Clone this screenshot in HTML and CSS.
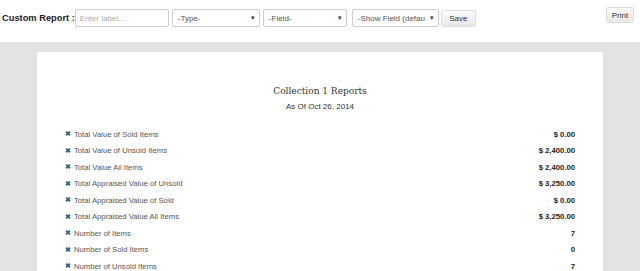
FILE: index.html
```html
<!DOCTYPE html>
<html lang="en">
<head>
    <meta charset="UTF-8">
    <meta name="viewport" content="width=device-width, initial-scale=1.0">
    <title>Custom Report</title>
    <link rel="stylesheet" href="styles.css">
</head>
<body>

    <div class="toolbar">
        <div class="builder">
            <label class="builder-label">Custom Report :</label>
            <input type="text" class="field label-input" placeholder="Enter label...">
            <div class="field select type">-Type-<span class="caret">&#9662;</span></div>
            <div class="field select fld">-Field-<span class="caret">&#9662;</span></div>
            <div class="field select show">-Show Field (defau<span class="caret">&#9662;</span></div>
            <button class="btn save-btn">Save</button>
        </div>
        <button class="btn print-btn">Print</button>
    </div>

    <div class="stage">
        <div class="paper">
            <h2 class="report-title">Collection 1 Reports</h2>
            <p class="report-date">As Of Oct 26, 2014</p>

            <ul class="report-rows">
                <li><span class="remove">&#10006;</span><span class="name">Total Value of Sold Items</span><span class="value">$ 0.00</span></li>
                <li><span class="remove">&#10006;</span><span class="name">Total Value of Unsold Items</span><span class="value">$ 2,400.00</span></li>
                <li><span class="remove">&#10006;</span><span class="name">Total Value All Items</span><span class="value">$ 2,400.00</span></li>
                <li><span class="remove">&#10006;</span><span class="name">Total Appraised Value of Unsold</span><span class="value">$ 3,250.00</span></li>
                <li><span class="remove">&#10006;</span><span class="name">Total Appraised Value of Sold</span><span class="value">$ 0.00</span></li>
                <li><span class="remove">&#10006;</span><span class="name">Total Appraised Value All Items</span><span class="value">$ 3,250.00</span></li>
                <li><span class="remove">&#10006;</span><span class="name">Number of Items</span><span class="value">7</span></li>
                <li><span class="remove">&#10006;</span><span class="name">Number of Sold Items</span><span class="value">0</span></li>
                <li><span class="remove">&#10006;</span><span class="name">Number of Unsold Items</span><span class="value">7</span></li>
            </ul>
        </div>
    </div>

</body>
</html>
```

FILE: styles.css
```css
body {
    font-family: "Liberation Sans", Arial, sans-serif;
    margin: 0;
    padding: 0;
    background-color: #fff;
    color: #333;
    overflow: hidden;
}

.toolbar {
    display: flex;
    justify-content: space-between;
    align-items: flex-start;
    height: 42px;
    padding: 7px 6px 0 2px;
    box-sizing: border-box;
}

.builder {
    display: flex;
    align-items: center;
    margin-top: 2px;
}

.builder-label {
    font-size: 9.3px;
    font-weight: bold;
    color: #222;
    margin-right: 0;
}

.field {
    height: 18px;
    box-sizing: border-box;
    border: 1px solid #ccc;
    border-radius: 2px;
    background: #fff;
    font-family: "Liberation Sans", Arial, sans-serif;
    font-size: 8px;
    color: #555;
}

.label-input {
    width: 94px;
    padding: 0 4px;
    outline: none;
}

.label-input::placeholder {
    color: #aaa;
}

.select {
    display: flex;
    align-items: center;
    justify-content: space-between;
    padding: 0 4px 0 5px;
    white-space: nowrap;
    overflow: hidden;
}

.type {
    width: 88px;
    margin-left: 3px;
}

.fld {
    width: 84px;
    margin-left: 3px;
}

.show {
    width: 87px;
    margin-left: 5px;
}

.caret {
    font-size: 7px;
    color: #333;
}

.btn {
    height: 17px;
    padding: 0 6px;
    border: 1px solid #ddd;
    border-radius: 2px;
    background: linear-gradient(#fafafa, #e8e8e8);
    font-family: "Liberation Sans", Arial, sans-serif;
    font-size: 8px;
    color: #333;
    cursor: pointer;
}

.save-btn {
    width: 35px;
    padding: 0;
    margin-left: 2px;
}

.print-btn {
    height: 16px;
    width: 28px;
    padding: 0;
}

.stage {
    background-color: #e3e3e3;
    padding: 10px 37px 0 37px;
    height: 229px;
    box-sizing: border-box;
}

.paper {
    background: #fff;
    height: 100%;
    padding: 33px 28px 0 28px;
    box-sizing: border-box;
}

.report-title {
    font-family: "DejaVu Serif", "Liberation Serif", serif;
    font-weight: normal;
    font-stretch: condensed;
    font-size: 10px;
    text-align: center;
    margin: 0;
    color: #333;
}

.report-date {
    font-size: 8px;
    text-align: center;
    margin: 6px 0 0 0;
    color: #333;
}

.report-rows {
    list-style: none;
    margin: 15px 0 0 0;
    padding: 0;
}

.report-rows li {
    display: flex;
    align-items: center;
    height: 16.5px;
    font-size: 7.7px;
    color: #555;
}

.remove {
    color: #2a6496;
    font-size: 7px;
    font-weight: bold;
    width: 9px;
}

.name {
    flex: 1;
}

.value {
    font-weight: bold;
    color: #222;
}
```
